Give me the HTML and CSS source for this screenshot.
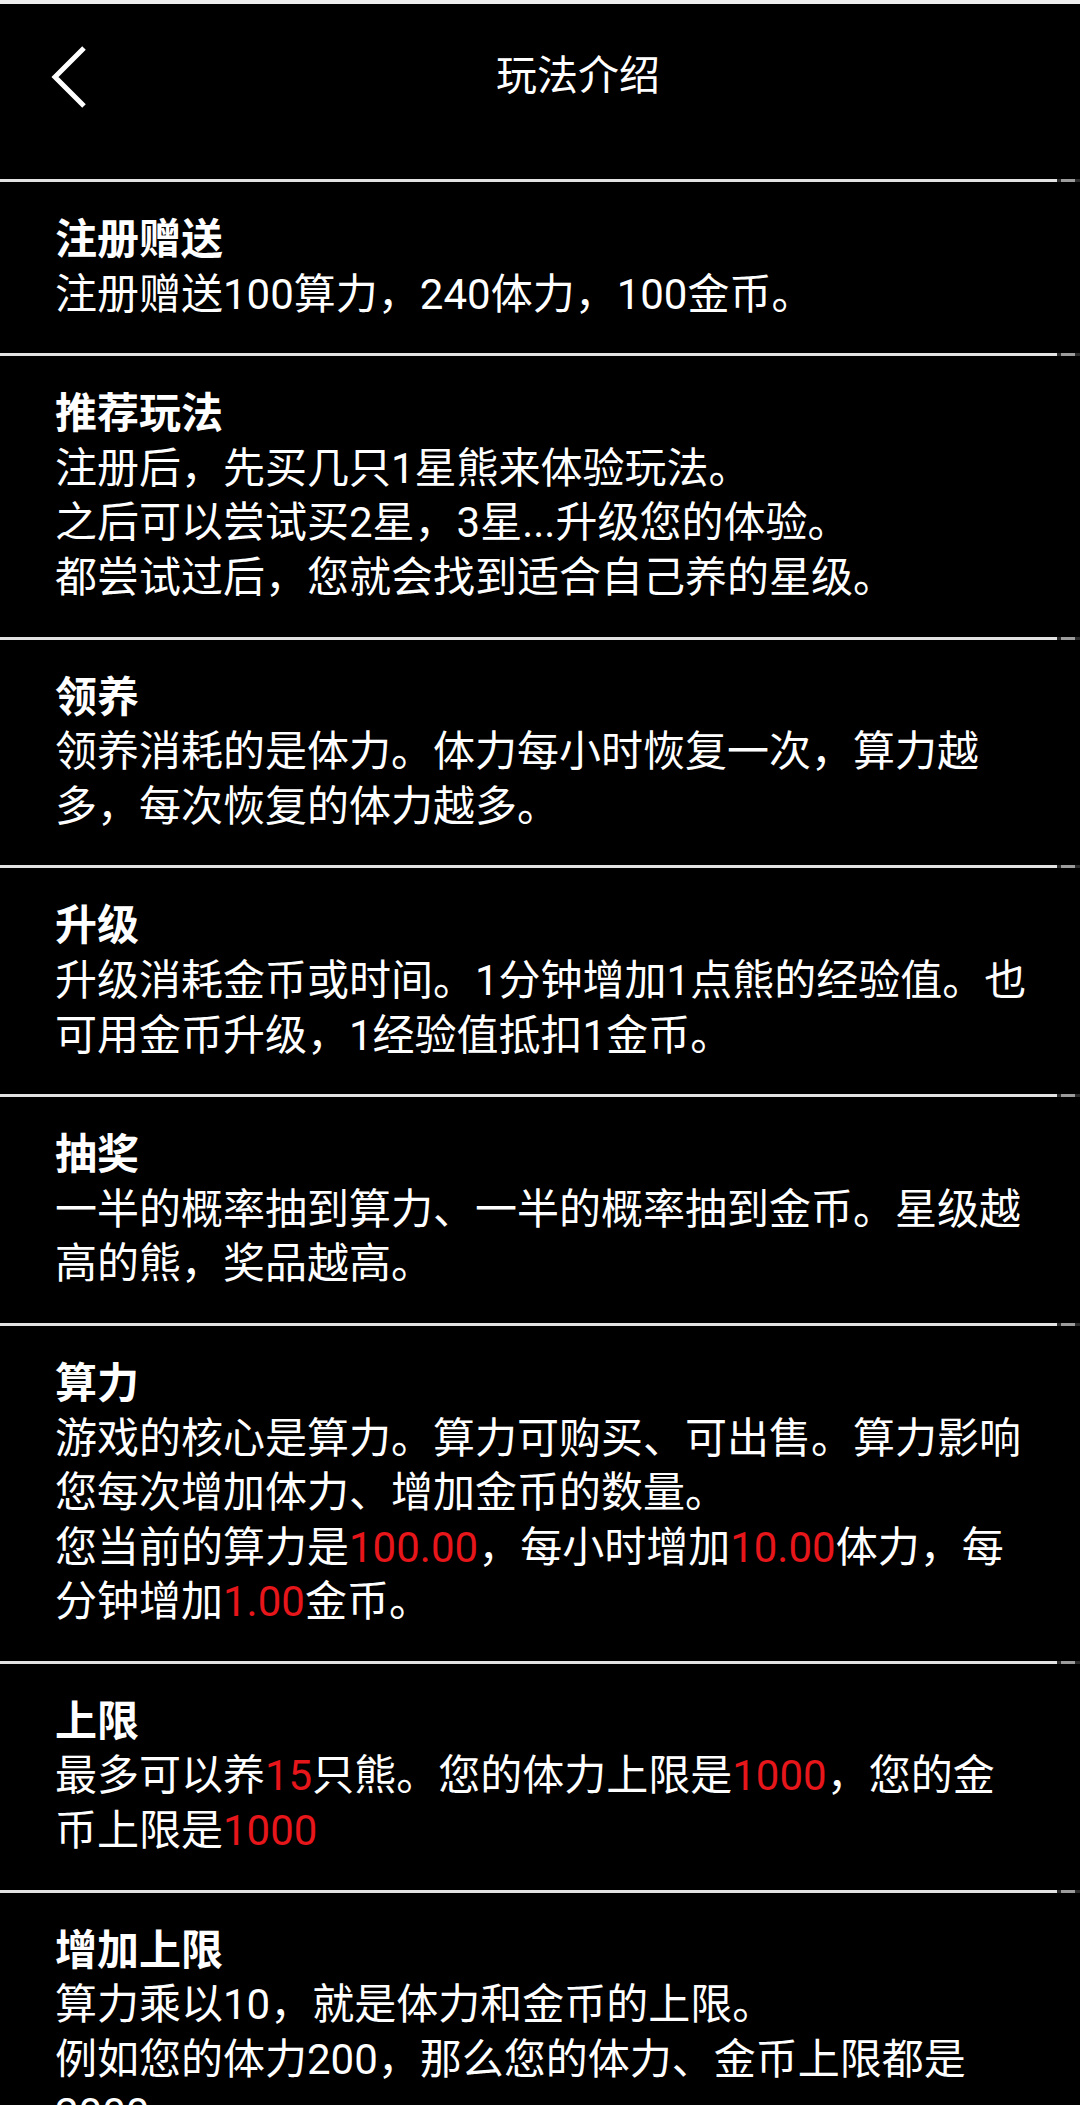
FILE: index.html
```html
<!DOCTYPE html>
<html lang="zh-CN">
<head>
<meta charset="utf-8">
<title>玩法介绍</title>
<link rel="stylesheet" href="styles.css">
</head>
<body>
<div class="page">
  <header class="header">
    <div class="status-strip"></div>
    <div class="toolbar">
      <div class="back">
        <svg class="back-icon" width="40" height="64" viewBox="0 0 40 64">
          <polyline points="36,3 7,32 36,61" fill="none" stroke="#ffffff" stroke-width="5" stroke-linecap="butt" stroke-linejoin="miter"/>
        </svg>
      </div>
      <div class="title">玩法介绍</div>
      <div class="spacer"></div>
    </div>
  </header>
  <div class="divider"></div>

  <section class="item">
    <div class="item-title">注册赠送</div>
    <div class="item-text">注册赠送100算力，240体力，100金币。</div>
  </section>
  <div class="divider"></div>

  <section class="item">
    <div class="item-title">推荐玩法</div>
    <div class="item-text">注册后，先买几只1星熊来体验玩法。<br>之后可以尝试买2星，3星...升级您的体验。<br>都尝试过后，您就会找到适合自己养的星级。</div>
  </section>
  <div class="divider"></div>

  <section class="item">
    <div class="item-title">领养</div>
    <div class="item-text">领养消耗的是体力。体力每小时恢复一次，算力越多，每次恢复的体力越多。</div>
  </section>
  <div class="divider"></div>

  <section class="item">
    <div class="item-title">升级</div>
    <div class="item-text">升级消耗金币或时间。1分钟增加1点熊的经验值。也可用金币升级，1经验值抵扣1金币。</div>
  </section>
  <div class="divider"></div>

  <section class="item">
    <div class="item-title">抽奖</div>
    <div class="item-text">一半的概率抽到算力、一半的概率抽到金币。星级越高的熊，奖品越高。</div>
  </section>
  <div class="divider"></div>

  <section class="item">
    <div class="item-title">算力</div>
    <div class="item-text">游戏的核心是算力。算力可购买、可出售。算力影响您每次增加体力、增加金币的数量。<br>您当前的算力是<span class="hl">100.00</span>，每小时增加<span class="hl">10.00</span>体力，每分钟增加<span class="hl">1.00</span>金币。</div>
  </section>
  <div class="divider"></div>

  <section class="item">
    <div class="item-title">上限</div>
    <div class="item-text">最多可以养<span class="hl">15</span>只熊。您的体力上限是<span class="hl">1000</span>，您的金币上限是<span class="hl">1000</span></div>
  </section>
  <div class="divider"></div>

  <section class="item">
    <div class="item-title">增加上限</div>
    <div class="item-text">算力乘以10，就是体力和金币的上限。<br>例如您的体力200，那么您的体力、金币上限都是2000。</div>
  </section>
  <div class="divider"></div>
</div>
</body>
</html>
```

FILE: styles.css
```css
html, body {
  margin: 0;
  padding: 0;
  background: #000000;
}

.page {
  width: 1080px;
  background: #000000;
  color: #ffffff;
  font-family: Roboto, "Noto Sans CJK SC", "Noto Sans", sans-serif;
}

.status-strip {
  height: 4px;
  background: #eeeeee;
}

.header {
  height: 179px;
  background: #000000;
}

.toolbar {
  height: 146px;
  display: grid;
  grid-template-columns: 117px 1fr 41px;
  align-items: center;
}

.back {
  display: flex;
  align-items: center;
  padding-left: 48px;
}

.back-icon {
  display: block;
}

.title {
  text-align: center;
  font-size: 41px;
  line-height: 1.3;
  color: #ffffff;
}

.divider {
  height: 3px;
  background: linear-gradient(to right,
    #e2e2e2 0, #e2e2e2 1057px,
    #2a2a2a 1057px, #2a2a2a 1061px,
    #9c9c9c 1061px, #9c9c9c 1075px,
    #2a2a2a 1075px, #2a2a2a 1080px);
}

.item {
  padding: 31px 50px 31px 55px;
  font-size: 42px;
  line-height: 1.3;
}

.item-title {
  font-weight: 700;
}

.item-text {
  font-weight: 400;
}

.hl {
  color: #e6161b;
}
```
